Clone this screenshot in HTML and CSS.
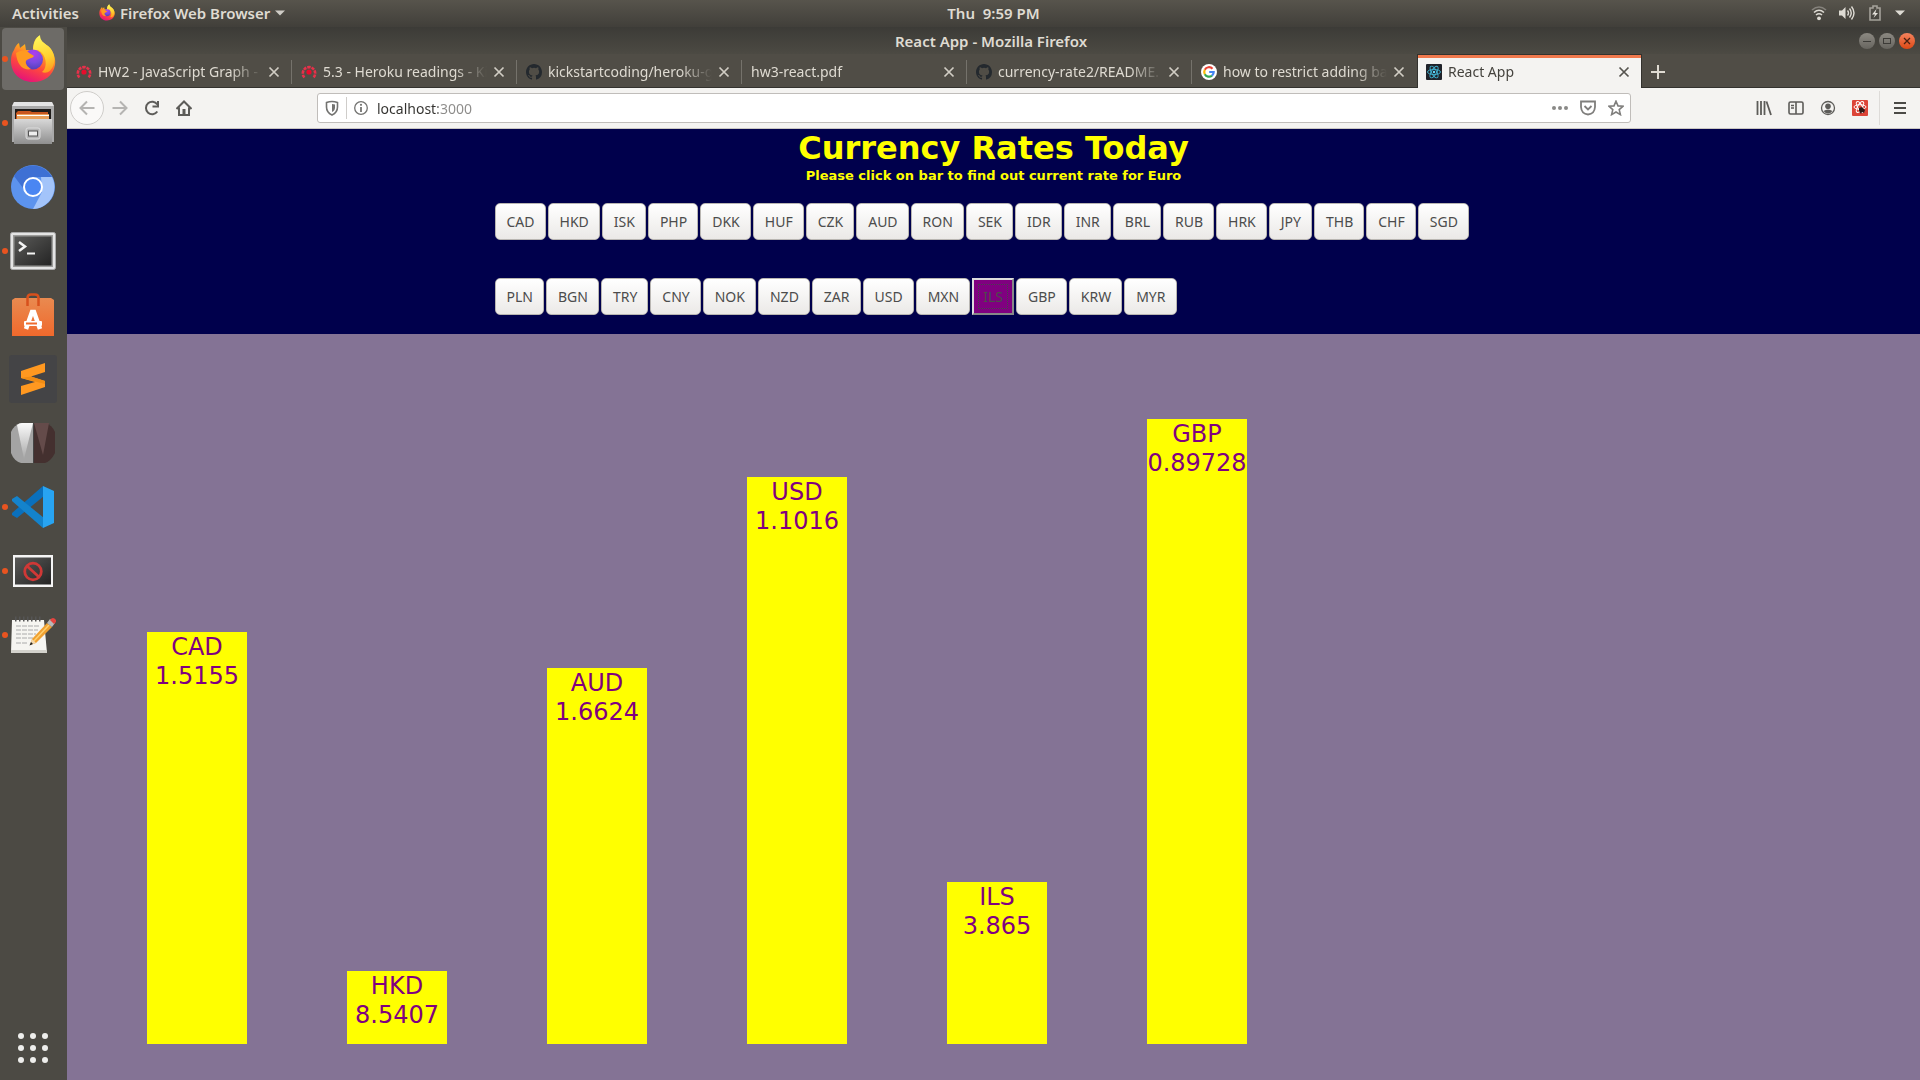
FILE: index.html
```html
<!DOCTYPE html>
<html lang="en">
<head>
<meta charset="utf-8">
<title>React App</title>
<link rel="stylesheet" href="styles.css">
</head>
<body>
<svg class="defs" aria-hidden="true">
  <defs>
    <linearGradient id="ffBody" x1="0.75" y1="0" x2="0.35" y2="1">
      <stop offset="0" stop-color="#fff44f"/><stop offset=".35" stop-color="#ffa91e"/><stop offset=".65" stop-color="#ff4a3c"/><stop offset="1" stop-color="#e5127a"/>
    </linearGradient>
    <linearGradient id="ffFlame" x1="0.5" y1="0" x2="0.7" y2="1">
      <stop offset="0" stop-color="#fff75a"/><stop offset=".6" stop-color="#ffd030"/><stop offset="1" stop-color="#ff9a1f"/>
    </linearGradient>
    <radialGradient id="ffGlobe" cx=".55" cy=".2" r=".9">
      <stop offset="0" stop-color="#b03cf0"/><stop offset=".5" stop-color="#7a4be0"/><stop offset="1" stop-color="#4a3cb0"/>
    </radialGradient>
    <linearGradient id="metal" x1="0" y1="0" x2="0" y2="1"><stop offset="0" stop-color="#d8d8d8"/><stop offset="1" stop-color="#8f8f8f"/></linearGradient>
    <linearGradient id="screen" x1="0" y1="0" x2="1" y2="1"><stop offset="0" stop-color="#5a5a58"/><stop offset="1" stop-color="#242424"/></linearGradient>
    <linearGradient id="bag" x1="0" y1="0" x2="0" y2="1"><stop offset="0" stop-color="#e98a50"/><stop offset="1" stop-color="#f0692c"/></linearGradient>
    <linearGradient id="pale" x1="0" y1="0" x2="0" y2="1"><stop offset="0" stop-color="#fafafa"/><stop offset="1" stop-color="#a8a8a8"/></linearGradient>
    <symbol id="firefox" viewBox="0 0 46 48">
      <path d="M4 15 C5 12 7 9 9 8 L10 13 C12 11 14 10 15 9 L16 15 L23 15 C23 8 25 3 29 1 C30 6 34 8 38 11 C44 17 46 24 45 30 C43 41 34 47 23 47 C10 47 1 38 1 26 C1 21 2 18 4 15Z" fill="url(#ffBody)"/>
      <path d="M23 17 C23 9 25 4 30 0 C30 6 34 8 38 11 C43 15 45 21 44 28 C42 37 36 39 32 37 C38 33 37 19 28 15Z" fill="url(#ffFlame)"/>
      <circle cx="23" cy="24.500" r="10" fill="url(#ffGlobe)"/>
      <path d="M6 18 C9 16 13 15 17 16 C20 19 23 20 24 21 C22 24 18 23 16 26 C15 29 18 32 21 34 C13 36 7 30 6 18Z" fill="#ff9a20"/>
    </symbol>
    <symbol id="close" viewBox="0 0 12 12"><path d="M1.500 1.500 L10.500 10.500 M10.500 1.500 L1.500 10.500" stroke="currentColor" stroke-width="1.700" fill="none"/></symbol>
    <symbol id="kenzie" viewBox="0 0 16 16">
      <circle cx="8" cy="8" r="2.600" fill="#e80c2c"/>
      <path d="M3.400 13.500 A6.200 6.200 0 1 1 12.600 13.500" fill="none" stroke="#e8304a" stroke-width="2.600" stroke-dasharray="3.200 .9"/>
    </symbol>
    <symbol id="github" viewBox="0 0 16 16"><path fill="#24292e" d="M8 0C3.580 0 0 3.580 0 8c0 3.540 2.290 6.530 5.470 7.590.4.070.55-.17.55-.38 0-.19-.01-.82-.01-1.490-2.010.37-2.530-.49-2.690-.94-.09-.23-.48-.94-.82-1.130-.28-.15-.68-.52-.01-.53.63-.01 1.080.58 1.230.82.72 1.210 1.870.87 2.330.66.07-.52.28-.87.51-1.070-1.780-.2-3.640-.89-3.640-3.950 0-.87.31-1.590.82-2.150-.08-.2-.36-1.020.08-2.120 0 0 .67-.21 2.200.82a7.600 7.600 0 0 1 4 0c1.530-1.040 2.200-.82 2.200-.82.44 1.100.16 1.920.08 2.120.51.56.82 1.270.82 2.150 0 3.070-1.870 3.750-3.650 3.950.29.25.54.73.54 1.480 0 1.070-.01 1.930-.01 2.200 0 .21.15.46.55.38A8.010 8.010 0 0 0 16 8c0-4.420-3.580-8-8-8z"/></symbol>
  </defs>
</svg>

<header class="topbar">
  <div class="topbar-left">
    <button class="top-item">Activities</button>
    <button class="top-item app-menu"><svg width="16" height="17"><use href="#firefox"/></svg>Firefox Web Browser<svg width="10" height="6" viewBox="0 0 10 6"><path d="M0 0.500H10L5 5.500Z" fill="#cfccc6"/></svg></button>
  </div>
  <time class="clock">Thu&nbsp; 9:59 PM</time>
  <div class="status">
    <svg width="16" height="16" viewBox="0 0 16 16" fill="none" stroke-width="1.600"><path d="M1 5 Q8 -1 15 5" stroke="#85827c"/><path d="M3 7.500 Q8 3 13 7.500 M5 10 Q8 7.500 11 10" stroke="#dedbd4"/><circle cx="8" cy="13.300" r="1.900" fill="#dedbd4"/></svg>
    <svg width="16" height="16" viewBox="0 0 16 16"><path d="M0 5.500H3L6.500 2V14L3 10.500H0Z" fill="#dedbd4"/><path d="M8.500 5.500Q10.500 8 8.500 10.500M10.500 3.500Q14 8 10.500 12.500M12.500 1.500Q17.500 8 12.500 14.500" fill="none" stroke="#dedbd4" stroke-width="1.400"/></svg>
    <svg width="16" height="16" viewBox="0 0 16 16"><path d="M3 3H6V1H10V3H13V15H3Z" fill="none" stroke="#a5a29b" stroke-width="1.600"/><path d="M9.500 4L5 9.500H8L6.500 13L11 8H8.300Z" fill="#e4e1da"/></svg>
    <svg width="10" height="6" viewBox="0 0 10 6"><path d="M0 0.500H10L5 5.500Z" fill="#dedbd4"/></svg>
  </div>
</header>

<div class="desktop">
  <nav class="dock" aria-label="Dock">
    <button class="dock-item running focused" aria-label="Firefox"><svg width="46" height="48"><use href="#firefox"/></svg></button>
    <button class="dock-item running" aria-label="Files"><svg width="44" height="44" viewBox="0 0 44 44"><path d="M3 1H41L43 5V41H1V5Z" fill="#777"/><path d="M3 1H41L43 5H1Z" fill="#e4e4e4"/><path d="M1 5H43V41H1Z" fill="#a9a9a9"/><rect x="4" y="8" width="36" height="12" fill="#1e1c1a"/><path d="M5 12L7 10H19L21 11H37V18H5Z" fill="#c8561e"/><path d="M6 13H38V18H6Z" fill="#e9a05a"/><path d="M6 14H38V15H6Z" fill="#fff"/><rect x="3" y="18" width="38" height="25" fill="url(#metal)"/><rect x="15" y="27" width="14" height="11" rx="2" fill="#b5b5b5" stroke="#ddd"/><rect x="17.500" y="30" width="9" height="5" fill="#eee" stroke="#555"/></svg></button>
    <button class="dock-item" aria-label="Chromium"><svg width="44" height="44" viewBox="0 0 44 44"><circle cx="22" cy="22" r="22" fill="#5c93ee"/><path d="M3 11A22 22 0 0 1 41 12H22L12 23Z" fill="#3e70d4"/><path d="M41 12A22 22 0 0 1 22 44L31 27L30 12Z" fill="#a3c4fa"/><circle cx="22" cy="22" r="9" fill="#4a86f2" stroke="#fff" stroke-width="2"/></svg></button>
    <button class="dock-item running" aria-label="Terminal"><svg width="46" height="38" viewBox="0 0 46 38"><rect x=".5" y=".5" width="45" height="37" rx="2" fill="#e4e4e4" stroke="#aaa"/><rect x="3" y="3" width="40" height="32" fill="#9b9b99"/><rect x="4.500" y="4.500" width="37" height="29" fill="url(#screen)"/><path d="M9 10L15 14.500L9 19" fill="none" stroke="#f4f4f4" stroke-width="2.500"/><path d="M17 21.500H25" stroke="#f4f4f4" stroke-width="2"/></svg></button>
    <button class="dock-item" aria-label="Ubuntu Software"><svg width="42" height="44" viewBox="0 0 42 44"><path d="M0 7L3 5H39L42 7V43H0Z" fill="url(#bag)"/><path d="M15.500 13V5Q15.500 1.500 19 1.500H23Q26.500 1.500 26.500 5V13" fill="none" stroke="#d8501c" stroke-width="2.500"/><path d="M14 36L20 19H22L28 36" fill="none" stroke="#fff" stroke-width="4.500"/><rect x="12" y="28" width="18" height="5" rx="1" fill="#fff"/><path d="M14 30.500H25" stroke="#ef6c30" stroke-width="2"/></svg></button>
    <button class="dock-item" aria-label="Sublime Text"><svg width="48" height="48" viewBox="0 0 48 48"><rect width="48" height="48" rx="3" fill="#444446"/><path d="M12 16L36 8V17L22 21.500L36 26V32L12 40V31L26 27L12 23Z" fill="#ff9820"/><path d="M12 23L22 21.500L36 26V29Z" fill="#f08c14"/></svg></button>
    <button class="dock-item" aria-label="Icon viewer"><svg width="44" height="40" viewBox="0 0 44 40"><path d="M10 0H22V40H10Q3 38 0 30V9Q3 2 10 0Z" fill="#a4a4a4"/><path d="M6 2Q8 0 11 0H22L13 36Z" fill="url(#pale)"/><path d="M22 0H34Q41 2 44 9V30Q40 38 34 40H22Z" fill="#44302f"/><path d="M23 0H38L32 32Z" fill="#644b4a"/><path d="M22.500 0V40" stroke="#444"/></svg></button>
    <button class="dock-item running" aria-label="Visual Studio Code"><svg width="42" height="42" viewBox="0 0 42 42"><path d="M0 27L31 0L32 10L5 32L0 29Z" fill="#0a70bd"/><path d="M0 13L5 10L32 32L31 42L0 15Z" fill="#1483cc"/><path d="M31 0L42 5V37L31 42Z" fill="#28a4f2"/></svg></button>
    <button class="dock-item running" aria-label="Screenshot blocked"><svg width="40" height="32" viewBox="0 0 40 32"><rect width="40" height="32" fill="#f5f5f5"/><rect x="2" y="2.500" width="36" height="27" fill="url(#screen)"/><circle cx="20" cy="16.500" r="8.300" fill="none" stroke="#cf3836" stroke-width="2.800"/><path d="M14 11L26 22" stroke="#cf3836" stroke-width="2.800"/></svg></button>
    <button class="dock-item running" aria-label="Text Editor"><svg width="46" height="38" viewBox="0 0 46 38"><path d="M2 4H34L37 37H1Z" fill="#f6f5f1"/><path d="M1 34H37V37H1Z" fill="#d3d2cc"/><path d="M5 3H33" stroke="#555" stroke-width="5" stroke-dasharray="1.500 2.500"/><path d="M6 10H30M6 14H28M6 18H26M6 22H24M6 27H18" stroke="#aaa" stroke-width="1" stroke-dasharray="5 1"/><path d="M20 29L22 23L37 7L42 11L26 27Z" fill="#f0a030"/><path d="M23 26L39 9" stroke="#ffd070" stroke-width="1.500"/><path d="M37 7L40 3L45 7L42 11Z" fill="#b9b9b9"/><path d="M40 4Q43 0 46 4V6L44 8Z" fill="#e6443f"/><path d="M20 29L22 23L26 27Z" fill="#f4d8ac"/><path d="M19.500 29.500L21 26L23 28Z" fill="#222"/></svg></button>
    <button class="dock-item apps" aria-label="Show Applications"><svg width="32" height="32" viewBox="0 0 32 32" fill="#eeeeec"><circle cx="4" cy="4" r="3"/><circle cx="16" cy="4" r="3"/><circle cx="28" cy="4" r="3"/><circle cx="4" cy="16" r="3"/><circle cx="16" cy="16" r="3"/><circle cx="28" cy="16" r="3"/><circle cx="4" cy="28" r="3"/><circle cx="16" cy="28" r="3"/><circle cx="28" cy="28" r="3"/></svg></button>
  </nav>

  <div class="window">
    <div class="titlebar">
      <div class="title">React App - Mozilla Firefox</div>
      <div class="window-buttons">
        <button class="win-btn" aria-label="Minimize"><svg width="16" height="16" viewBox="0 0 16 16"><path d="M4 8.500H12" stroke="#3c3b37"/></svg></button>
        <button class="win-btn" aria-label="Maximize"><svg width="16" height="16" viewBox="0 0 16 16"><rect x="4.500" y="5.500" width="7" height="5" fill="none" stroke="#3c3b37"/></svg></button>
        <button class="win-btn win-close" aria-label="Close"><svg width="16" height="16" viewBox="0 0 16 16"><path d="M5 5L11 11M11 5L5 11" stroke="#4a2010" stroke-width="1.300"/></svg></button>
      </div>
    </div>

    <div class="tabs">
      <div class="tab"><svg class="favicon" viewBox="0 0 16 16"><use href="#kenzie"/></svg><span class="tab-label">HW2 - JavaScript Graph -</span><button class="tab-close" aria-label="Close tab"><svg width="12" height="12"><use href="#close"/></svg></button></div>
      <div class="tab"><svg class="favicon" viewBox="0 0 16 16"><use href="#kenzie"/></svg><span class="tab-label">5.3 - Heroku readings - Ki</span><button class="tab-close" aria-label="Close tab"><svg width="12" height="12"><use href="#close"/></svg></button></div>
      <div class="tab"><svg class="favicon" viewBox="0 0 16 16"><use href="#github"/></svg><span class="tab-label">kickstartcoding/heroku-g</span><button class="tab-close" aria-label="Close tab"><svg width="12" height="12"><use href="#close"/></svg></button></div>
      <div class="tab"><span class="tab-label">hw3-react.pdf</span><button class="tab-close" aria-label="Close tab"><svg width="12" height="12"><use href="#close"/></svg></button></div>
      <div class="tab"><svg class="favicon" viewBox="0 0 16 16"><use href="#github"/></svg><span class="tab-label">currency-rate2/README.</span><button class="tab-close" aria-label="Close tab"><svg width="12" height="12"><use href="#close"/></svg></button></div>
      <div class="tab"><svg class="favicon" viewBox="0 0 16 16"><circle cx="8" cy="8" r="8" fill="#fff"/><g fill="none" stroke-width="2.200"><path d="M11.500 4.800A4.700 4.700 0 0 0 3.800 5.800" stroke="#ea4335"/><path d="M3.800 5.800A4.700 4.700 0 0 0 3.800 10.200" stroke="#fbbc05"/><path d="M3.800 10.200A4.700 4.700 0 0 0 11 11.600" stroke="#34a853"/><path d="M11 11.600A4.700 4.700 0 0 0 12.700 8H8.200" stroke="#4285f4"/></g></svg><span class="tab-label">how to restrict adding ba</span><button class="tab-close" aria-label="Close tab"><svg width="12" height="12"><use href="#close"/></svg></button></div>
      <div class="tab active"><svg class="favicon" viewBox="0 0 16 16"><rect width="16" height="16" rx="1" fill="#20232a"/><g fill="none" stroke="#41b4d3" stroke-width=".9"><ellipse cx="8" cy="8" rx="6.500" ry="2.600"/><ellipse cx="8" cy="8" rx="6.500" ry="2.600" transform="rotate(60 8 8)"/><ellipse cx="8" cy="8" rx="6.500" ry="2.600" transform="rotate(120 8 8)"/></g><circle cx="8" cy="8" r="1.200" fill="#61dafb"/></svg><span class="tab-label">React App</span><button class="tab-close" aria-label="Close tab"><svg width="12" height="12"><use href="#close"/></svg></button></div>
      <button class="new-tab" aria-label="New tab"><svg width="14" height="14" viewBox="0 0 14 14"><path d="M7 0V14M0 7H14" stroke="#dfdbd2" stroke-width="2"/></svg></button>
    </div>

    <div class="toolbar">
      <div class="nav-buttons">
        <button class="tool back" aria-label="Back"><svg width="16" height="16" viewBox="0 0 16 16"><path d="M8 1.500L1.500 8L8 14.500M1.500 8H15.500" fill="none" stroke="#b5b4b2" stroke-width="2"/></svg></button>
        <button class="tool" aria-label="Forward"><svg width="16" height="16" viewBox="0 0 16 16"><path d="M8 1.500L14.500 8L8 14.500M14.500 8H.5" fill="none" stroke="#b5b4b2" stroke-width="2"/></svg></button>
        <button class="tool" aria-label="Reload"><svg width="16" height="16" viewBox="0 0 16 16"><path d="M13.300 11.500A6.200 6.200 0 1 1 13.300 4.500" fill="none" stroke="#5d5c59" stroke-width="2"/><path d="M14 1V6.500H8.500" fill="none" stroke="#5d5c59" stroke-width="2"/></svg></button>
        <button class="tool" aria-label="Home"><svg width="16" height="16" viewBox="0 0 16 16"><path d="M.5 9L8 1.500L15.500 9M3 7.500V15H13V7.500" fill="none" stroke="#5d5c59" stroke-width="2"/><path d="M6.500 14.500V9H9.500V14.500Z" fill="#5d5c59"/></svg></button>
      </div>
      <div class="urlbar">
        <svg width="16" height="16" viewBox="0 0 16 16"><path d="M2.500 2.500Q8 .5 13.500 2.500V7Q13.500 12.500 8 15Q2.500 12.500 2.500 7Z" fill="none" stroke="#737371" stroke-width="1.600"/><path d="M8 4L11 4.500V7.500Q11 10.500 8 12Z" fill="#737371"/></svg>
        <span class="url-divider"></span>
        <svg width="14" height="14" viewBox="0 0 14 14"><circle cx="7" cy="7" r="6.300" fill="none" stroke="#737371" stroke-width="1.300"/><path d="M7 6V11" stroke="#737371" stroke-width="1.800"/><circle cx="7" cy="3.800" r="1.100" fill="#737371"/></svg>
        <input class="url" type="text" value="localhost:3000" aria-label="Address">
        <div class="url-actions">
          <svg width="16" height="16" viewBox="0 0 16 16" fill="#8a8987"><circle cx="2" cy="8" r="2"/><circle cx="8" cy="8" r="2"/><circle cx="14" cy="8" r="2"/></svg>
          <svg width="16" height="16" viewBox="0 0 16 16" fill="none" stroke="#7f7e7c" stroke-width="1.800"><path d="M1 1.500H15V7Q14.500 14 8 14.500Q1.500 14 1 7Z"/><path d="M4.500 6L8 9.500L11.500 6"/></svg>
          <svg width="16" height="16" viewBox="0 0 16 16" fill="none" stroke="#7f7e7c" stroke-width="1.600"><path d="M8 1.200L10 5.900L15 6.300L11.200 9.600L12.400 14.600L8 12L3.600 14.600L4.800 9.600L1 6.300L6 5.900Z"/></svg>
        </div>
      </div>
      <div class="tool-actions">
        <button class="tool" aria-label="Library"><svg width="16" height="16" viewBox="0 0 16 16" stroke="#5d5c59" stroke-width="1.800"><path d="M1.500 1V15M5 1V15M8.500 1V15M10.500 1.500L15 15"/></svg></button>
        <button class="tool" aria-label="Sidebars"><svg width="16" height="16" viewBox="0 0 16 16" fill="none" stroke="#5d5c59" stroke-width="1.600"><rect x="1" y="2" width="14" height="12" rx="1.500"/><path d="M8 2V14M3 5.500H6M3 8H6" /></svg></button>
        <button class="tool" aria-label="Account"><svg width="16" height="16" viewBox="0 0 16 16"><circle cx="8" cy="8" r="6.500" fill="none" stroke="#5d5c59" stroke-width="1.300"/><circle cx="8" cy="6.200" r="2.800" fill="#5d5c59"/><path d="M3.500 11Q8 8 12.500 11Q10.500 13.500 8 13.500Q5.500 13.500 3.500 11Z" fill="#5d5c59"/></svg></button>
        <button class="tool" aria-label="React Developer Tools"><svg width="16" height="16" viewBox="0 0 16 16"><rect width="16" height="16" rx="1" fill="#dc4437"/><g fill="none" stroke="#fff"><ellipse cx="8" cy="7" rx="6" ry="2.300"/><ellipse cx="8" cy="7" rx="6" ry="2.300" transform="rotate(60 8 7)"/><ellipse cx="8" cy="7" rx="6" ry="2.300" transform="rotate(120 8 7)"/></g><path d="M7 8L10 7L13 10L12 13L10 12L9 14L7 11Z" fill="#301815"/></svg></button>
        <button class="tool menu" aria-label="Menu"><svg width="12" height="12" viewBox="0 0 12 12"><path d="M0 1H12M0 6H12M0 11H12" stroke="#4b4a47" stroke-width="2"/></svg></button>
      </div>
    </div>

    <main class="page">
      <section class="rates">
        <h1>Currency Rates Today</h1>
        <p>Please click on bar to find out current rate for Euro</p>
        <div class="currencies">
          <div class="currency-row">
            <button>CAD</button><button>HKD</button><button>ISK</button><button>PHP</button><button>DKK</button><button>HUF</button><button>CZK</button><button>AUD</button><button>RON</button><button>SEK</button><button>IDR</button><button>INR</button><button>BRL</button><button>RUB</button><button>HRK</button><button>JPY</button><button>THB</button><button>CHF</button><button>SGD</button>
          </div>
          <div class="currency-row">
            <button>PLN</button><button>BGN</button><button>TRY</button><button>CNY</button><button>NOK</button><button>NZD</button><button>ZAR</button><button>USD</button><button>MXN</button><button class="selected"><span>ILS</span></button><button>GBP</button><button>KRW</button><button>MYR</button>
          </div>
        </div>
      </section>
      <section class="chart" aria-label="Exchange rates">
        <button class="bar" style="height:412px">CAD<br>1.5155</button>
        <button class="bar" style="height:73px">HKD<br>8.5407</button>
        <button class="bar" style="height:376px">AUD<br>1.6624</button>
        <button class="bar" style="height:567px">USD<br>1.1016</button>
        <button class="bar" style="height:162px">ILS<br>3.865</button>
        <button class="bar" style="height:625px">GBP<br>0.89728</button>
      </section>
    </main>
  </div>
</div>
</body>
</html>
```
FILE: styles.css
```css
* { box-sizing: border-box; }

body {
  margin: 0;
  min-height: 100vh;
  display: flex;
  flex-direction: column;
  font-family: "Noto Sans", "Open Sans", sans-serif;
  font-size: 14px;
  line-height: 20px;
  background: #4c4a44;
}

button {
  margin: 0;
  padding: 0;
  border: 0;
  background: none;
  color: inherit;
  font: inherit;
}

svg { display: block; flex: none; }
.defs { position: absolute; width: 0; height: 0; }

/* Desktop top bar */
.topbar {
  height: 27px;
  display: grid;
  grid-template-columns: 1fr auto 1fr;
  align-items: center;
  padding: 0 15px 2px 12px;
  background: linear-gradient(#57544c, #413f3a);
  color: #dfdbd2;
  font-size: 15px;
  font-weight: 600;
}
.topbar-left { display: flex; gap: 20px; }
.clock { padding-left: 70px; }
.app-menu { display: flex; align-items: center; gap: 5px; }
.status { display: flex; justify-content: flex-end; align-items: center; gap: 12px; }

.desktop { flex: 1; display: flex; }

/* Dock */
.dock {
  width: 67px;
  flex: none;
  display: flex;
  flex-direction: column;
  gap: 2px;
  padding: 1px 3px 1px 2px;
  background: #4c4a44;
}
.dock-item {
  position: relative;
  width: 62px;
  height: 62px;
  display: grid;
  place-items: center;
  border-radius: 4px;
}
.dock-item.focused { background: #6d6b67; }
.dock-item.running::before {
  content: "";
  position: absolute;
  left: 0;
  top: 28px;
  width: 6px;
  height: 6px;
  border-radius: 50%;
  background: #e95420;
}
.apps { margin-top: auto; }

/* Browser window */
.window { flex: 1; min-width: 0; display: flex; flex-direction: column; }

.titlebar {
  height: 27px;
  display: grid;
  grid-template-columns: 1fr auto 1fr;
  align-items: center;
  padding-right: 5px;
  background: linear-gradient(#3c3b37, #4c4a43);
  color: #dfdbd2;
  font-size: 15px;
  font-weight: 600;
}
.title { grid-column: 2; }
.window-buttons { display: flex; justify-content: flex-end; gap: 4px; }
.win-btn {
  width: 16px;
  height: 16px;
  border-radius: 50%;
  background: linear-gradient(#8c8982, #67655f);
}
.win-close { background: linear-gradient(#f5835e, #dd4814); }

.tabs {
  height: 34px;
  display: flex;
  background: #504d46;
  border-bottom: 1px solid #33322e;
  color: #dfdbd2;
}
.tab {
  width: 225px;
  height: 34px;
  display: flex;
  align-items: center;
  gap: 6px;
  padding: 2px 12px 0 9px;
  background: linear-gradient(#75726b, #75726b) right 6px / 1px 24px no-repeat;
}
.tab:nth-child(6) { background: none; }
.tab.active {
  padding: 2px 11px 0 8px;
  background: #f4f3f1;
  color: #45433e;
  border: solid #33322e;
  border-width: 0 1px;
  box-shadow: inset 0 1px #33322e, inset 0 4px #f0784c;
}
.favicon { width: 16px; height: 16px; }
.tab-label {
  flex: 1;
  min-width: 0;
  overflow: hidden;
  white-space: nowrap;
  mask-image: linear-gradient(90deg, #000 calc(100% - 32px), transparent);
}
.tab-close { opacity: .9; }
.new-tab { width: 32px; display: grid; place-items: center; padding-top: 2px; }

.toolbar {
  height: 41px;
  display: flex;
  align-items: center;
  padding: 0 1px 0 3px;
  background: #f4f3f1;
  border-bottom: 1px solid #c9c6c2;
}
.nav-buttons { width: 247px; display: flex; align-items: center; }
.tool { width: 32px; height: 34px; display: grid; place-items: center; }
.tool.back {
  width: 34px;
  border: 1px solid #cfcdca;
  border-radius: 50%;
  background: #faf9f8;
}
.urlbar {
  flex: 1;
  min-width: 0;
  height: 30px;
  display: flex;
  align-items: center;
  padding: 0 6px;
  border: 1px solid #c0bdba;
  border-radius: 3px;
  background: #fff;
}
.url-divider { width: 1px; height: 22px; margin: 0 7px 0 6px; background: #cfcdca; }
.url {
  flex: 1;
  min-width: 0;
  margin-left: 9px;
  padding: 1px 0 0;
  border: 0;
  outline: 0;
  font: inherit;
  color: transparent;
  background: linear-gradient(90deg, #33322f 61px, #8c8b89 61px);
  background-clip: text;
}
.url-actions { display: flex; gap: 12px; }
.tool-actions { display: flex; margin-left: 117px; }
.tool.menu { width: 40px; margin-left: 3px; border-left: 1px solid #dddbd8; }

/* Currency page */
.page {
  flex: 1;
  display: flex;
  flex-direction: column;
  font-family: "DejaVu Sans", sans-serif;
  background: #847395;
}
.rates {
  padding-bottom: 19px;
  background: #00004c;
  color: #ff0;
  text-align: center;
}
.rates h1 { margin: 0; font-size: 32px; line-height: 38px; }
.rates p { margin: 0; font-size: 13px; line-height: 18px; font-weight: bold; }
.currencies {
  width: 1000px;
  max-width: 100%;
  margin: 18px auto 0;
  padding-left: 1px;
  display: grid;
  gap: 38px;
}
.currency-row { display: flex; gap: 2px; }
.currency-row button {
  height: 37px;
  padding: 0 10px 0 11px;
  border: 1px solid #b9b6b2;
  border-radius: 5px;
  background: linear-gradient(#fff, #ebe9e7);
  color: #4c4c4c;
  font-family: "Noto Sans", "Open Sans", sans-serif;
  font-size: 14px;
}
.currency-row .selected {
  padding: 0 4px;
  border: 2px outset #dcdcdc;
  border-radius: 0;
  background: purple;
}
.selected span {
  display: grid;
  place-items: center;
  height: 25px;
  padding: 0 4px;
  border: 1px dotted #45434c;
}

.chart {
  flex: 1;
  display: flex;
  align-items: flex-end;
  gap: 100px;
  padding: 0 80px 36px;
}
.bar {
  width: 100px;
  display: flex;
  justify-content: center;
  align-items: flex-start;
  padding-top: 1px;
  background: #ff0;
  color: purple;
  font-size: 24px;
  line-height: 29px;
  text-align: center;
}
```
